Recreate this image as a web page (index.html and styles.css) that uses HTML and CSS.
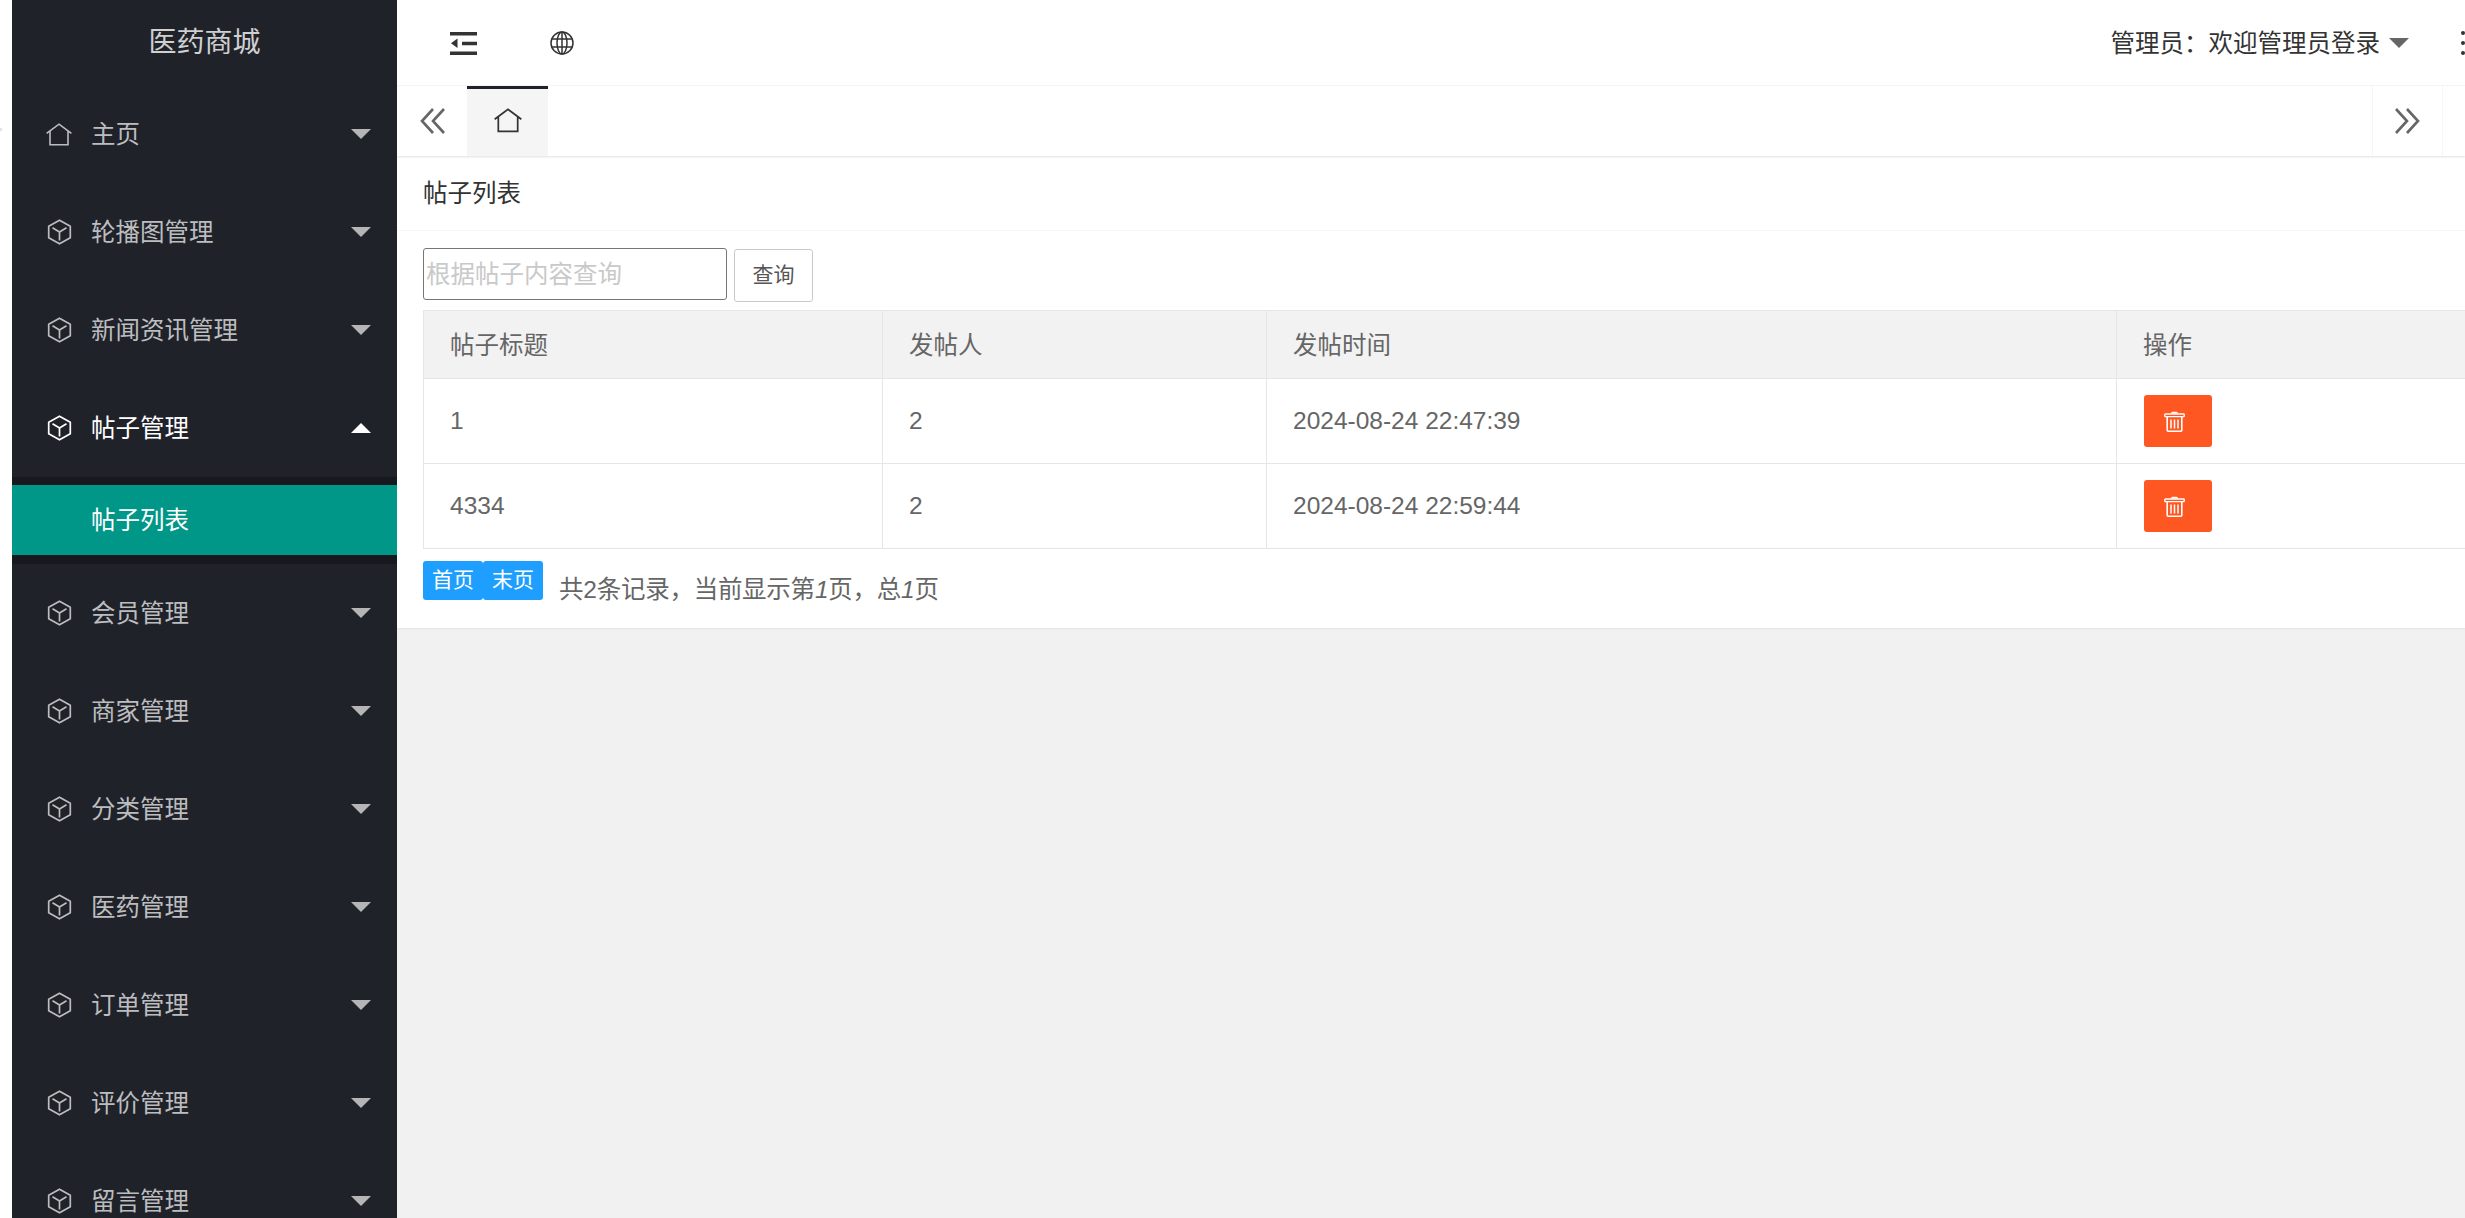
FILE: index.html
```html
<!DOCTYPE html>
<html lang="zh-CN">
<head>
<meta charset="utf-8">
<title>医药商城</title>
<link rel="stylesheet" href="styles.css">
</head>
<body>
<svg class="defs" aria-hidden="true">
  <symbol id="i-cube" viewBox="0 0 25 26">
    <path d="M12.5 1.2 23.3 7.2V18.8L12.5 24.8 1.7 18.8V7.2Z" fill="none" stroke="currentColor" stroke-width="1.7" stroke-linejoin="round"/>
    <path d="M5.5 8.7 12.5 13 19.5 8.7M12.5 13V21.5" fill="none" stroke="currentColor" stroke-width="1.7"/>
  </symbol>
  <symbol id="i-home" viewBox="0 0 26 23">
    <path d="M.6 10.4 13 1.2 25.4 10.4M4 8V21.7H22V8" fill="none" stroke="currentColor" stroke-width="1.6"/>
  </symbol>
  <symbol id="i-trash" viewBox="0 0 21 21">
    <path d="M7 2.5Q7 .7 8.5.7H12.5Q14 .7 14 2.5Z" fill="#fff"/>
    <rect x=".8" y="3" width="19.4" height="2.6" rx=".6" fill="none" stroke="#fff" stroke-width="1.4"/>
    <path d="M3.2 5.6V19.2Q3.2 20.2 4.2 20.2H16.8Q17.8 20.2 17.8 19.2V5.6" fill="none" stroke="#fff" stroke-width="1.6"/>
    <path d="M7 8.5V17.5M10.5 8.5V17.5M14 8.5V17.5" stroke="#fff" stroke-width="1.5"/>
  </symbol>
</svg>
<span class="edge-mark"></span>
<div class="app">
  <aside class="side">
    <div class="logo">医药商城</div>
    <ul class="nav">
      <li class="nav-item"><svg class="nav-icon home"><use href="#i-home"/></svg><span class="nav-text">主页</span><i class="caret"></i></li>
      <li class="nav-item"><svg class="nav-icon"><use href="#i-cube"/></svg><span class="nav-text">轮播图管理</span><i class="caret"></i></li>
      <li class="nav-item"><svg class="nav-icon"><use href="#i-cube"/></svg><span class="nav-text">新闻资讯管理</span><i class="caret"></i></li>
      <li class="nav-item open"><svg class="nav-icon"><use href="#i-cube"/></svg><span class="nav-text">帖子管理</span><i class="caret up"></i></li>
      <li class="sub"><div class="sub-item">帖子列表</div></li>
      <li class="nav-item"><svg class="nav-icon"><use href="#i-cube"/></svg><span class="nav-text">会员管理</span><i class="caret"></i></li>
      <li class="nav-item"><svg class="nav-icon"><use href="#i-cube"/></svg><span class="nav-text">商家管理</span><i class="caret"></i></li>
      <li class="nav-item"><svg class="nav-icon"><use href="#i-cube"/></svg><span class="nav-text">分类管理</span><i class="caret"></i></li>
      <li class="nav-item"><svg class="nav-icon"><use href="#i-cube"/></svg><span class="nav-text">医药管理</span><i class="caret"></i></li>
      <li class="nav-item"><svg class="nav-icon"><use href="#i-cube"/></svg><span class="nav-text">订单管理</span><i class="caret"></i></li>
      <li class="nav-item"><svg class="nav-icon"><use href="#i-cube"/></svg><span class="nav-text">评价管理</span><i class="caret"></i></li>
      <li class="nav-item"><svg class="nav-icon"><use href="#i-cube"/></svg><span class="nav-text">留言管理</span><i class="caret"></i></li>
    </ul>
  </aside>
  <main class="main">
    <header class="top">
      <svg class="ic-fold" viewBox="0 0 27 23">
        <path d="M0 0H27V3.4H0ZM0 19.4H27V23H0ZM12 9.8H27V13.2H12Z" fill="#333"/>
        <path d="M7.5 6.5V16L1 11.3Z" fill="#333"/>
      </svg>
      <svg class="ic-globe" viewBox="0 0 24 24" fill="none" stroke="#333" stroke-width="1.5">
        <circle cx="12" cy="12" r="11"/>
        <ellipse cx="12" cy="12" rx="5" ry="11"/>
        <path d="M12 1V23M1.5 8H22.5M1.5 16H22.5"/>
      </svg>
      <div class="user"><span class="user-name">管理员：欢迎管理员登录</span><i class="caret dark"></i></div>
      <div class="dots"><b></b><b></b><b></b></div>
    </header>
    <nav class="tabs">
      <div class="tab-arrow">
        <svg class="chev" viewBox="0 0 25 26" fill="none" stroke="#666" stroke-width="2.6"><path d="M13 1 2 13 13 25M24 1 13 13 24 25"/></svg>
      </div>
      <div class="tab-home"><svg class="tab-home-icon"><use href="#i-home"/></svg></div>
      <div class="tab-spacer"></div>
      <div class="tab-next">
        <svg class="chev" viewBox="0 0 25 26" fill="none" stroke="#666" stroke-width="2.6"><path d="M1 1 12 13 1 25M12 1 23 13 12 25"/></svg>
      </div>
      <div class="tab-end"></div>
    </nav>
    <section class="card">
      <div class="card-head">帖子列表</div>
      <div class="card-body">
        <form class="search">
          <input class="search-input" type="text" placeholder="根据帖子内容查询">
          <button class="search-btn" type="button">查询</button>
        </form>
        <table class="grid">
          <thead>
            <tr class="head-row"><th class="c1">帖子标题</th><th class="c2">发帖人</th><th class="c3">发帖时间</th><th class="c4">操作</th></tr>
          </thead>
          <tbody>
            <tr class="row"><td>1</td><td>2</td><td>2024-08-24 22:47:39</td><td><button class="del" type="button"><svg class="trash"><use href="#i-trash"/></svg></button></td></tr>
            <tr class="row"><td>4334</td><td>2</td><td>2024-08-24 22:59:44</td><td><button class="del" type="button"><svg class="trash"><use href="#i-trash"/></svg></button></td></tr>
          </tbody>
        </table>
        <div class="pager">
          <a class="page-btn">首页</a><a class="page-btn">末页</a>
          <span class="page-info">共2条记录，当前显示第<em>1</em>页，总<em>1</em>页</span>
        </div>
      </div>
    </section>
  </main>
</div>
</body>
</html>
```

FILE: styles.css
```css
* { box-sizing: border-box; }
html, body { margin: 0; height: 100%; overflow: hidden; background: #fff; }
body { font-family: "Liberation Sans", "Noto Sans CJK SC", sans-serif; font-size: 24.5px; color: #666; }
.defs { position: absolute; width: 0; height: 0; }
.edge-mark { position: absolute; left: 0; top: 128px; width: 2px; height: 3px; background: #e4e4e4; }

.app { display: flex; height: 1218px; padding-left: 12px; }

.side { width: 385px; flex: none; background: #20222a; overflow: hidden; color: #bcbdbf; }
.logo { height: 85px; line-height: 85px; text-align: center; font-size: 28px; color: #cfd0d1; }
.nav { list-style: none; margin: 0; padding: 0; }
.nav-item { height: 98px; display: flex; align-items: center; padding: 0 26px 0 35px; }
.nav-icon { width: 25px; height: 26px; flex: none; }
.nav-icon.home { height: 23px; width: 26px; margin-left: -1px; }
.nav-text { margin-left: 19px; line-height: 1; padding-top: 3px; }
.caret { margin-left: auto; width: 0; height: 0; border-style: solid; border-width: 10px 10px 0; border-color: #b5b5b5 transparent transparent; }
.caret.up { border-width: 0 10px 10px; border-color: transparent transparent #fff; }
.open { color: #fff; }
.sub { background: #18191e; padding: 8px 0 9px; }
.sub-item { height: 70px; line-height: 71px; padding-left: 79px; background: #009688; color: #fff; }

.main { flex: 1; min-width: 0; background: #f1f1f1; overflow: hidden; }

.top { height: 86px; display: flex; align-items: center; padding-left: 53px; background: #fff; border-bottom: 1px solid #f6f6f6; }
.ic-fold { width: 27px; height: 23px; flex: none; margin-top: 1px; }
.ic-globe { width: 24px; height: 24px; flex: none; margin-left: 73px; margin-top: 1px; }
.user { margin-left: auto; display: flex; align-items: center; color: #333; white-space: nowrap; }
.user-name { padding-bottom: 3px; }
.caret.dark { margin-left: 9px; border-color: #666 transparent transparent; margin-top: 1px; }
.dots { margin-left: 52px; width: 4px; display: flex; flex-direction: column; gap: 6px; }
.dots b { width: 4px; height: 4px; background: #333; border-radius: 50%; }

.tabs { position: relative; height: 70px; display: flex; background: #fff; box-shadow: 0 1px 2px rgba(0,0,0,.12); }
.tab-arrow { width: 70px; display: flex; align-items: center; padding-left: 23px; }
.chev { width: 25px; height: 26px; flex: none; }
.tab-home { width: 81px; display: flex; align-items: center; justify-content: center; background: #f5f5f5; border-top: 3px solid #20222a; color: #333; }
.tab-home-icon { width: 28px; height: 25px; margin-top: -5px; }
.tab-spacer { flex: 1; }
.tab-next { width: 70px; display: flex; align-items: center; justify-content: center; border-left: 1px solid #f6f6f6; }
.tab-end { width: 23px; border-left: 1px solid #f6f6f6; }

.card { background: #fff; height: 472px; box-shadow: 0 1px 2px rgba(0,0,0,.06); }
.card-head { height: 75px; line-height: 76px; padding-left: 26px; color: #333; border-bottom: 1px solid #f6f6f6; }
.card-body { padding: 17px 0 0 26px; }

.search { display: flex; align-items: flex-start; margin: 0 0 8px; }
.search-input { width: 304px; height: 52px; padding: 2px 2px 0; border: 1px solid #767676; border-radius: 3px; font: inherit; background: #fff; outline: 0; }
.search-input::placeholder { color: #c9c9c9; opacity: 1; }
.search-btn { width: 79px; height: 53px; margin: 1px 0 0 7px; padding: 0 0 6px; background: #fff; border: 1px solid #c9c9c9; border-radius: 3px; font-family: inherit; font-size: 21px; color: #555; }

.grid { width: 2400px; table-layout: fixed; border-collapse: collapse; }
.c1 { width: 459px; }
.c2 { width: 384px; }
.c3 { width: 850px; }
.grid th, .grid td { border: 1px solid #e6e6e6; padding: 0 26px; text-align: left; font-weight: 400; color: #666; }
.grid th { background: #f2f2f2; padding-bottom: 2px; }
.head-row { height: 68px; }
.row { height: 85px; }
.del { display: block; width: 68px; height: 52px; margin-left: 1px; padding: 0 0 0 20px; border: 0; border-radius: 3px; background: #ff5722; }
.trash { display: block; width: 21px; height: 21px; }

.pager { display: flex; align-items: flex-start; margin-top: 12px; }
.page-btn { width: 60px; height: 39px; line-height: 38px; text-align: center; font-size: 21px; color: #fff; background: #1e9fff; border-radius: 3px; }
.page-info { margin: 11px 0 0 16px; line-height: 36px; letter-spacing: -.25px; color: #666; }
```
